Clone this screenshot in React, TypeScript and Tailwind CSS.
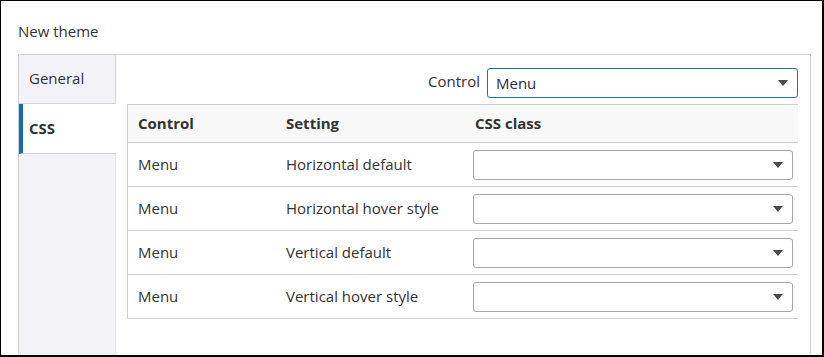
const rows = [
  { control: 'Menu', setting: 'Horizontal default' },
  { control: 'Menu', setting: 'Horizontal hover style' },
  { control: 'Menu', setting: 'Vertical default' },
  { control: 'Menu', setting: 'Vertical hover style' },
];

function Caret() {
  return (
    <svg width="10" height="6" viewBox="0 0 10 6" className="shrink-0">
      <path d="M0 0h10L5 6z" fill="#4a4a4a" />
    </svg>
  );
}

function Dropdown({ value, active }: { value?: string; active?: boolean }) {
  return (
    <div
      className={
        active
          ? 'flex h-[30px] w-[311px] items-center justify-between rounded-[3px] border border-[#1b6ec2] pl-[8px] pr-[9px]'
          : 'flex h-[30px] w-[320px] items-center justify-between rounded-[3px] border border-[#a8a8a8] pl-[8px] pr-[9px]'
      }
    >
      <span className="text-[15px] text-[#2e2a42]">{value}</span>
      <Caret />
    </div>
  );
}

export default function App() {
  return (
    <div
      className="h-[357px] w-[824px] overflow-hidden border-t border-l border-r-2 border-b-2 border-black bg-white text-[15px] text-[#333]"
      style={{ fontFamily: '"Open Sans", "Noto Sans", sans-serif' }}
    >
      <div className="pl-[17px] pt-[20px] leading-[20px]">New theme</div>

      <div className="ml-[17px] mt-[13px] flex h-[400px] w-[793px] border border-[#cfcfcf]">
        {/* tabs */}
        <div className="flex w-[97px] shrink-0 flex-col bg-[#f3f2f7]">
          <div className="flex h-[49px] items-center border-b border-r border-[#d4d4d4] pl-[10px] pb-[2px]">
            General
          </div>
          <div className="flex h-[50px] items-center border-b border-[#d4d4d4] border-l-[4px] border-l-[#0f6cbd] bg-white pl-[6px] font-bold">
            CSS
          </div>
          <div className="flex-1 border-r border-[#e0e0e0]" />
        </div>

        {/* content */}
        <div className="flex-1 pl-[11px] pr-[12px] pt-[13px]">
          <div className="flex items-center justify-end gap-[7px]">
            <span className="pb-[3px]">Control</span>
            <Dropdown value="Menu" active />
          </div>

          <div className="mt-[6px] border-l border-[#cfcfcf]">
            <div className="flex h-[39px] items-center border-y border-[#cfcfcf] bg-[#f8f8f8] font-bold">
              <div className="w-[148px] pl-[10px]">Control</div>
              <div className="w-[187px] pl-[10px]">Setting</div>
              <div className="pl-[12px]">CSS class</div>
            </div>
            {rows.map((r, i) => (
              <div
                key={i}
                className="flex h-[44px] items-center border-b border-[#cfcfcf]"
              >
                <div className="w-[148px] pl-[10px]">{r.control}</div>
                <div className="w-[187px] pl-[10px]">{r.setting}</div>
                <div className="pl-[10px]">
                  <Dropdown />
                </div>
              </div>
            ))}
          </div>
        </div>
      </div>
    </div>
  );
}
